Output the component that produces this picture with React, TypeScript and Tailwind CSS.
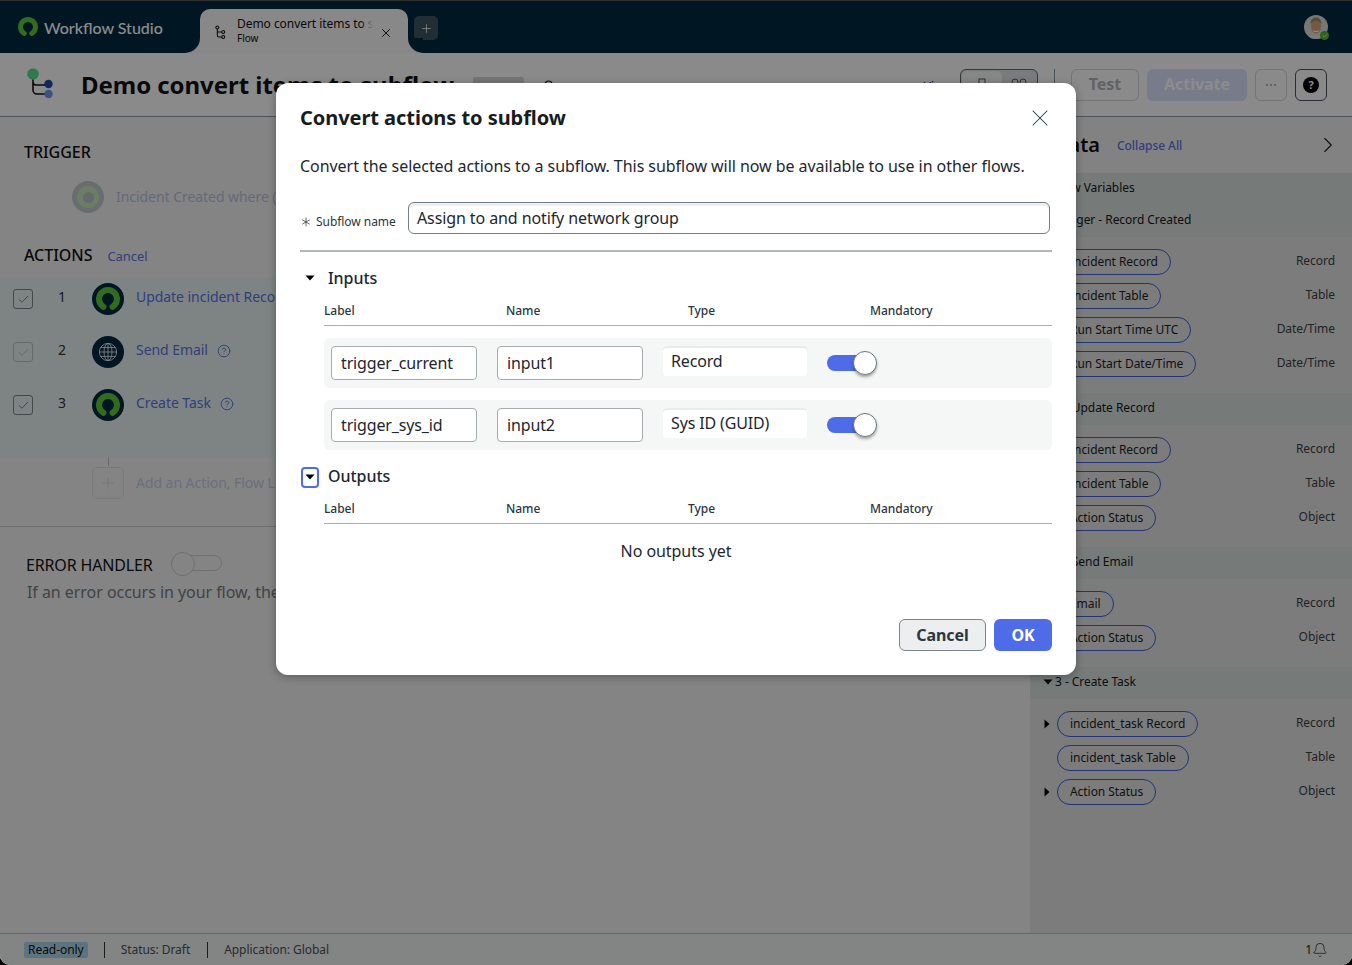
import { Asterisk, Bell, ChevronRight, CircleHelp, Ellipsis, Plus, X, Check } from "lucide-react";

const sections = [
  {
    title: "2 - Update Record",
    rows: [
      { name: "Incident Record", type: "Record", caret: true },
      { name: "Incident Table", type: "Table" },
      { name: "Action Status", type: "Object", caret: true },
    ],
  },
  {
    title: "3 - Send Email",
    rows: [
      { name: "Email", type: "Record", caret: true },
      { name: "Action Status", type: "Object", caret: true },
    ],
  },
  {
    title: "3 - Create Task",
    rows: [
      { name: "incident_task Record", type: "Record", caret: true },
      { name: "incident_task Table", type: "Table" },
      { name: "Action Status", type: "Object", caret: true },
    ],
  },
];

const triggerRows = [
  { name: "Incident Record", type: "Record", caret: true },
  { name: "Incident Table", type: "Table" },
  { name: "Run Start Time UTC", type: "Date/Time" },
  { name: "Run Start Date/Time", type: "Date/Time" },
];

const actions = [
  { n: 1, label: "Update incident Record", icon: "logo", dim: false },
  { n: 2, label: "Send Email", icon: "globe", dim: true },
  { n: 3, label: "Create Task", icon: "logo", dim: false },
];

function Ring({ size = 18, color = "#5cc53a" }: { size?: number; color?: string }) {
  return (
    <svg width={size} height={size} viewBox="0 0 24 24" fill="none">
      <path d="M7.500 19.800A9 9 0 1 1 16.500 19.800" stroke={color} strokeWidth="6" strokeLinecap="round" />
    </svg>
  );
}

function GlobeIcon() {
  return (
    <svg width="20" height="20" viewBox="0 0 20 20" fill="none" stroke="#fff" strokeWidth="0.8">
      <circle cx="10" cy="10" r="8.6" />
      <ellipse cx="10" cy="10" rx="4" ry="8.6" />
      <path d="M10 1.400v17.200M1.400 10h17.200M2.600 5.600h14.800M2.600 14.400h14.800" />
    </svg>
  );
}

function Caret({ open }: { open?: boolean }) {
  return (
    <svg width="10" height="10" viewBox="0 0 10 10" className={open ? "shrink-0" : "shrink-0 -rotate-90"}>
      <path d="M0.500 2.500h9L5 7.500z" fill="#000" />
    </svg>
  );
}

function PillRow({ name, type, caret }: { name: string; type: string; caret?: boolean }) {
  return (
    <div className="flex h-[26px] items-center pr-[17px]">
      <div className="flex w-[27px] shrink-0 justify-end pr-[5px]">{caret && <Caret />}</div>
      <div className="flex h-[26px] items-center rounded-full border border-[#3f5fd8] px-[12px] text-[12px] text-[#1a1f24]">
        {name}
      </div>
      <div className="mb-[2px] ml-auto text-[12px] text-[#3a4045]">{type}</div>
    </div>
  );
}

function Band({ children }: { children: React.ReactNode }) {
  return <div className="flex h-[32px] items-center gap-[2px] pb-[2px] pl-[13px] text-[12px] text-[#14181c]">{children}</div>;
}

function ColumnHead() {
  return (
    <div className="ml-[24px] grid h-[36px] grid-cols-[182px_182px_182px_1fr] items-center border-b border-[#a9aeb1] pt-[6px] text-[12px] leading-[16px] font-medium text-[#2b3640]">
      <div>Label</div>
      <div>Name</div>
      <div>Type</div>
      <div>Mandatory</div>
    </div>
  );
}

function Field({ children }: { children: React.ReactNode }) {
  return (
    <div className="flex h-[34px] w-[146px] items-center rounded-[4px] border border-[#a5abaf] bg-white px-[9px] text-[16px] tracking-[-0.15px] text-[#1d2730]">
      {children}
    </div>
  );
}

function InputRow({ label, name, type }: { label: string; name: string; type: string }) {
  return (
    <div className="ml-[24px] flex h-[50px] items-center rounded-[6px] bg-[#f5f6f6] pl-[7px]">
      <Field>{label}</Field>
      <div className="ml-[20px]">
        <Field>{name}</Field>
      </div>
      <div className="mb-[4px] ml-[20px] flex h-[30px] w-[144px] items-center rounded-[4px] bg-white px-[8px] text-[16px] tracking-[-0.15px] text-[#1d2730] shadow-[inset_0_2px_0_#e9eaea]">
        {type}
      </div>
      <div className="relative ml-[20px] h-[16px] w-[44px] rounded-full bg-[#4f6ce8]">
        <div className="absolute -top-[4px] left-[26px] h-[24px] w-[24px] rounded-full border border-[#6b7780] bg-white shadow-[0_2px_3px_rgba(0,0,0,0.35)]" />
      </div>
    </div>
  );
}

export default function App() {
  return (
    <div className="relative h-[965px] w-[1352px] overflow-hidden bg-black font-['Noto_Sans',sans-serif] tracking-[-0.05px]">
      <div className="flex h-full flex-col overflow-hidden rounded-b-[10px] bg-[#eeeeee]">
        {/* top nav */}
        <div className="flex h-[53px] shrink-0 items-end border-t border-[#555] bg-[#002a41]">
          <div className="flex h-[52px] w-[200px] items-center pl-[18px]">
            <Ring size={20} />
            <span className="mt-[2px] ml-[6px] font-['Lato',sans-serif] text-[16px] font-medium tracking-normal text-white">Workflow Studio</span>
          </div>
          <div className="relative flex h-[44px] w-[208px] items-center rounded-t-[10px] bg-[#f7f7f7] pl-[15px]">
            <div className="absolute bottom-0 -left-[15px] h-[15px] w-[15px] bg-[#f7f7f7]">
              <div className="h-full w-full rounded-br-[15px] bg-[#002a41]" />
            </div>
            <div className="absolute -right-[15px] bottom-0 h-[15px] w-[15px] bg-[#f7f7f7]">
              <div className="h-full w-full rounded-bl-[15px] bg-[#002a41]" />
            </div>
            <svg width="11" height="15" viewBox="0 0 12 16" fill="none" stroke="#111" strokeWidth="1.1" className="mt-[2px]">
              <circle cx="2.500" cy="2.500" r="1.600" />
              <circle cx="9" cy="7.500" r="1.600" />
              <circle cx="9" cy="13" r="1.600" />
              <path d="M2.500 4v7a2 2 0 0 0 2 2h3M2.500 7.500h5" />
            </svg>
            <div className="-mt-[2px] ml-[11px] w-[136px] overflow-hidden leading-none">
              <div className="relative whitespace-nowrap text-[12px] leading-[16px] text-[#111]">
                Demo convert items to subflow
                <div className="absolute inset-y-0 right-0 w-[12px] bg-gradient-to-r from-transparent to-[#f7f7f7]" />
              </div>
              <div className="text-[10px] leading-[12px] text-[#111]">Flow</div>
            </div>
            <X size={14} strokeWidth={1.6} className="mt-[3px] ml-[6px] text-[#111]" />
          </div>
          <div className="mb-[13px] ml-[6px] flex h-[24px] w-[24px] items-center justify-center rounded-[5px] bg-[#3d5563]">
            <Plus size={13} strokeWidth={1.4} className="text-white" />
          </div>
          <div className="relative mb-[14px] ml-auto mr-[24px] h-[24px] w-[24px]">
            <svg width="24" height="24" viewBox="0 0 24 24">
              <defs>
                <clipPath id="av">
                  <circle cx="12" cy="12" r="12" />
                </clipPath>
              </defs>
              <g clipPath="url(#av)">
                <rect width="24" height="24" fill="#d8dad8" />
                <ellipse cx="12" cy="11.500" rx="5" ry="7" fill="#d9a07e" />
                <path d="M6.500 9c0-5 3-6.500 5.500-6.500S17.500 4 17.500 9c-2-2-3.500-3-5.500-3S8.500 7 6.500 9z" fill="#a78a6a" />
                <path d="M9 15c2 1.500 4 1.500 6 0l-1 2h-4z" fill="#fff" />
                <path d="M3 24c1-4 5-5 9-5s8 1 9 5z" fill="#e2e2e2" />
              </g>
            </svg>
            <div className="absolute -right-[1px] -bottom-[1px] flex h-[9px] w-[9px] items-center justify-center rounded-full bg-[#52b72c]">
              <Check size={6} strokeWidth={3} className="text-white" />
            </div>
          </div>
        </div>

        {/* flow header */}
        <div className="flex h-[64px] shrink-0 items-center border-b border-[#8b9aa6] bg-[#fbfbfb] pr-[25px] pl-[27px]">
          <svg width="28" height="32" viewBox="0 0 28 32" fill="none" className="-mt-[1px]">
            <path d="M6 8v14a4 4 0 0 0 4 4h12M6 14a3 3 0 0 0 3 3h13" stroke="#111" strokeWidth="1.6" />
            <circle cx="6" cy="6" r="5.800" fill="#52df8c" />
            <circle cx="21.500" cy="16" r="4.200" fill="#1f4aa8" />
            <circle cx="21.500" cy="26" r="4.200" fill="#6f93ee" />
          </svg>
          <h1 className="ml-[26px] text-[24px] leading-none font-bold whitespace-nowrap text-[#111]">Demo convert items to subflow</h1>
          <div className="mt-[4px] ml-[19px] h-[20px] w-[51px] rounded-[2px] bg-[#d4d6d7] text-center text-[11px] leading-[20px] text-[#222]">Inactive</div>
          <svg width="14" height="14" viewBox="0 0 14 14" fill="none" stroke="#222" strokeWidth="1.2" className="mt-[4px] ml-[18px]">
            <path d="M3 7V4.500a3.500 3.500 0 0 1 7 0V7M2 7h10v6H2z" />
          </svg>
          <span className="mt-[4px] ml-auto text-[12px] text-[#222]">View:</span>
          <div className="ml-[7px] flex h-[32px] w-[78px] rounded-[6px] border border-[#5f6b74] bg-[#dfe1e2] p-[1px]">
            <div className="flex w-[40px] items-center justify-center rounded-[5px] bg-[#f3f4f4]">
              <svg width="8" height="14" viewBox="0 0 8 14" fill="none" stroke="#555" strokeWidth="1">
                <rect x="1" y="1" width="6" height="5" />
                <path d="M4 6v3" />
                <rect x="1" y="9" width="6" height="4" />
              </svg>
            </div>
            <div className="flex flex-1 items-center justify-center">
              <svg width="16" height="14" viewBox="0 0 16 14" fill="none" stroke="#555" strokeWidth="1">
                <circle cx="4" cy="4" r="3" />
                <circle cx="12" cy="4" r="3" />
                <circle cx="8" cy="11" r="2.500" />
              </svg>
            </div>
          </div>
          <div className="mx-[16px] h-[32px] w-px bg-[#8b9aa6]" />
          <div className="flex h-[32px] w-[68px] items-center justify-center rounded-[6px] border border-[#cfd3d6] pb-[2px] text-[16px] font-bold text-[#b0b4b7]">Test</div>
          <div className="ml-[8px] flex h-[32px] w-[100px] items-center justify-center rounded-[6px] bg-[#d9e0fb] pb-[2px] text-[16px] font-bold text-white">Activate</div>
          <div className="ml-[8px] flex h-[32px] w-[32px] items-center justify-center rounded-[6px] border border-[#cfd3d6]">
            <Ellipsis size={14} className="text-[#b0b4b7]" />
          </div>
          <div className="ml-[8px] flex h-[32px] w-[32px] items-center justify-center rounded-[6px] border border-[#4a5560]">
            <div className="flex h-[16px] w-[16px] items-center justify-center rounded-full bg-black text-[11px] leading-none font-bold text-white">?</div>
          </div>
        </div>

        {/* body */}
        <div className="flex min-h-0 flex-1">
          <div className="w-[1030px] shrink-0 bg-[#f0f0f0]">
            <div className="mt-[23px] pl-[24px] text-[16px] leading-[24px] font-medium text-[#111]">TRIGGER</div>
            <div className="mt-[17px] flex items-center pl-[72px]">
              <div className="flex h-[32px] w-[32px] items-center justify-center rounded-full bg-[#c0c7ca]">
                <div className="flex h-[22px] w-[22px] items-center justify-center rounded-full bg-[#c4e3b8]">
                  <div className="h-[11px] w-[11px] rounded-full bg-[#b9c0c4]" />
                </div>
              </div>
              <span className="mb-[2px] ml-[12px] text-[14px] text-[#b7bfdd]">Incident Created where (Active is true)</span>
            </div>
            <div className="mt-[30px] flex items-center pl-[24px]">
              <span className="text-[16px] leading-[24px] font-medium text-[#111]">ACTIONS</span>
              <span className="mt-[3px] ml-[15px] text-[13px] text-[#5a72e0]">Cancel</span>
            </div>
            <div className="mt-[10px] flex h-[180px] flex-col gap-[11px] bg-[#e5f1f1] pt-[1px]">
              {actions.map((a) => (
                <div key={a.n} className="flex h-[42px] items-center pl-[13px]">
                  <div className={"flex h-[20px] w-[20px] items-center justify-center rounded-[3px] border " + (a.dim ? "border-[#b9c2c4]" : "border-[#7d8589]")}>
                    <Check size={13} strokeWidth={1.2} className={a.dim ? "text-[#a4adaf]" : "text-[#444]"} />
                  </div>
                  <span className="mb-[5px] ml-[25px] w-[34px] text-[14px] text-[#333]">{a.n}</span>
                  <div className="flex h-[32px] w-[32px] items-center justify-center rounded-full bg-[#002a41]">
                    {a.icon === "logo" ? <Ring size={24} /> : <GlobeIcon />}
                  </div>
                  <span className="mb-[5px] ml-[12px] text-[14px] whitespace-nowrap text-[#5a72e0]">{a.label}</span>
                  <CircleHelp size={14} strokeWidth={1.3} className="mb-[3px] ml-[9px] text-[#3f5fd8]" />
                </div>
              ))}
            </div>
            <div className="ml-[108px] h-[9px] w-px bg-[#b8bbbd]" />
            <div className="mt-[1px] flex items-center pl-[92px]">
              <div className="flex h-[32px] w-[32px] items-center justify-center rounded-[5px] border border-[#dcdfe0]">
                <Plus size={18} strokeWidth={1} className="text-[#cdd0d2]" />
              </div>
              <span className="mb-[2px] ml-[12px] text-[14px] text-[#c3cae6]">Add an Action, Flow Logic, or Subflow</span>
            </div>
            <div className="mt-[27px] border-b border-[#c9cccd]" />
            <div className="mt-[26px] flex items-center pl-[26px]">
              <span className="text-[16px] leading-[24px] tracking-[-0.15px] text-[#111]">ERROR HANDLER</span>
              <div className="relative mb-[5px] ml-[18px] h-[16px] w-[51px] rounded-full border border-[#c9cccd]">
                <div className="absolute -top-[4px] -left-[1px] h-[24px] w-[24px] rounded-full border border-[#c9cccd] bg-[#f0f0f0]" />
              </div>
            </div>
            <p className="mt-[3px] pl-[27px] text-[16px] leading-[24px] text-[#757b80]">If an error occurs in your flow, the error handler runs.</p>
          </div>

          {/* data panel */}
          <div className="flex-1 bg-[#e2e2e2]">
            <div className="flex h-[56px] items-center bg-[#ededed] pr-[11px] pl-[24px]">
              <span className="text-[20px] font-semibold text-[#111]">Data</span>
              <span className="mt-[1px] ml-[17px] text-[12px] font-medium text-[#5a72e0]">Collapse All</span>
              <ChevronRight size={26} strokeWidth={1} className="ml-auto text-[#222]" />
            </div>
            <div className="bg-[#d7dfdd]">
              <Band>
                <Caret />
                <span>Flow Variables</span>
              </Band>
              <Band>
                <Caret open />
                <span>Trigger - Record Created</span>
              </Band>
            </div>
            <div className="flex flex-col gap-[8px] pt-[12px] pb-[16px]">
              {triggerRows.map((r) => (
                <PillRow key={r.name} {...r} />
              ))}
            </div>
            {sections.map((s) => (
              <div key={s.title}>
                <div className="bg-[#d7dfdd]">
                  <Band>
                    <Caret open />
                    <span>{s.title}</span>
                  </Band>
                </div>
                <div className="flex flex-col gap-[8px] pt-[12px] pb-[16px]">
                  {s.rows.map((r) => (
                    <PillRow key={r.name} {...r} />
                  ))}
                </div>
              </div>
            ))}
          </div>
        </div>

        {/* status bar */}
        <div className="flex h-[32px] shrink-0 items-center border-t border-[#b9bfc2] bg-[#eef1f1] pr-[24px] pl-[24px] text-[12px] text-[#4a5055]">
          <span className="mt-[1px] rounded-[2px] bg-[#a9d3e8] px-[4px] leading-[16px] text-[#111]">Read-only</span>
          <div className="ml-[16px] h-[16px] w-px bg-[#333]" />
          <span className="ml-[16px]">Status: Draft</span>
          <div className="ml-[17px] h-[16px] w-px bg-[#333]" />
          <span className="ml-[16px]">Application: Global</span>
          <span className="ml-auto text-[#222]">1</span>
          <Bell size={16} strokeWidth={1.1} className="text-[#222]" />
        </div>
      </div>

      {/* dialog */}
      <div className="absolute inset-0 flex items-start justify-center rounded-b-[10px] bg-black/45 pt-[83px]">
        <div className="h-[592px] w-[800px] rounded-[12px] bg-white px-[24px] shadow-[0_2px_8px_rgba(0,0,0,0.3)]">
          <div className="flex h-[70px] items-center">
            <h2 className="text-[20px] font-bold text-[#151c22]">Convert actions to subflow</h2>
            <X size={28} strokeWidth={0.9} className="mr-[-2px] ml-auto text-[#2b3640]" />
          </div>
          <p className="mt-[1px] text-[16px] leading-[24px] text-[#1d2730]">
            Convert the selected actions to a subflow. This subflow will now be available to use in other flows.
          </p>
          <div className="mt-[24px] flex items-center">
            <span className="mt-[7px] -ml-[2px] flex w-[18px]">
              <Asterisk size={16} strokeWidth={1.1} className="text-[#2b3640]" />
            </span>
            <span className="mt-[7px] w-[92px] text-[12px] text-[#2b3640]">Subflow name</span>
            <div className="flex h-[32px] w-[642px] items-center rounded-[6px] border border-[#737e86] bg-white px-[8px] text-[16px] tracking-[-0.1px] text-[#1d2730] shadow-[inset_0_3px_0_#eeefef]">
              Assign to and notify network group
            </div>
          </div>
          <div className="mt-[16px] h-[2px] bg-[#b1b6b9]" />
          <div className="mt-[14px] flex h-[24px] items-center pl-[5px]">
            <Caret open />
            <span className="ml-[13px] text-[16px] leading-[22px] font-medium text-[#1d2730]">Inputs</span>
          </div>
          <ColumnHead />
          <div className="mt-[12px] flex flex-col gap-[12px]">
            <InputRow label="trigger_current" name="input1" type="Record" />
            <InputRow label="trigger_sys_id" name="input2" type="Sys ID (GUID)" />
          </div>
          <div className="mt-[16px] flex h-[22px] items-center pl-[1px]">
            <div className="flex h-[21px] w-[18px] items-center justify-center rounded-[4px] border-2 border-[#4f6ce8]">
              <Caret open />
            </div>
            <span className="mb-[2px] ml-[9px] text-[16px] leading-[20px] font-medium text-[#1d2730]">Outputs</span>
          </div>
          <ColumnHead />
          <div className="mt-[15px] text-center text-[16px] leading-[24px] text-[#1d2730]">No outputs yet</div>
          <div className="mt-[56px] flex justify-end gap-[8px]">
            <div className="flex h-[32px] w-[87px] items-center justify-center rounded-[6px] border border-[#7d868c] bg-[#eceef0] text-[16px] font-bold text-[#2b3640]">Cancel</div>
            <div className="flex h-[32px] w-[58px] items-center justify-center rounded-[6px] bg-[#4f6ce8] text-[16px] font-bold text-white">OK</div>
          </div>
        </div>
      </div>
    </div>
  );
}
